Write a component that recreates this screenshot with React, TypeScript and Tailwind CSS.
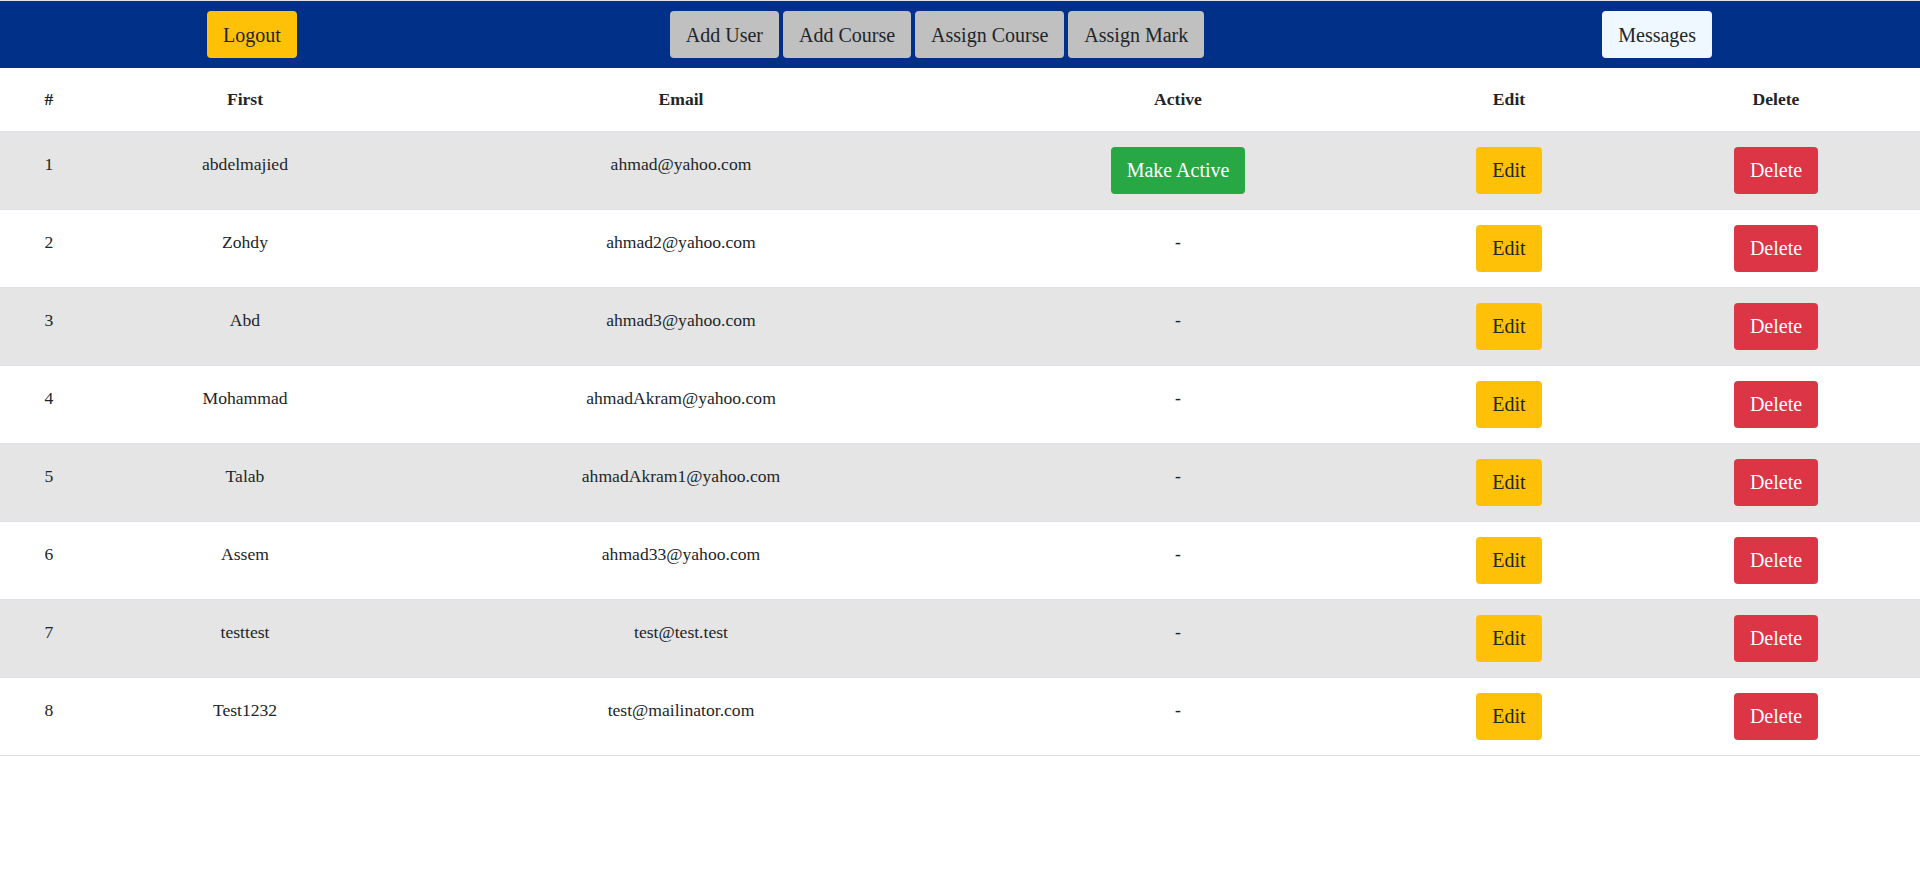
const users = [
  { id: 1, first: 'abdelmajied', email: 'ahmad@yahoo.com', active: false },
  { id: 2, first: 'Zohdy', email: 'ahmad2@yahoo.com', active: true },
  { id: 3, first: 'Abd', email: 'ahmad3@yahoo.com', active: true },
  { id: 4, first: 'Mohammad', email: 'ahmadAkram@yahoo.com', active: true },
  { id: 5, first: 'Talab', email: 'ahmadAkram1@yahoo.com', active: true },
  { id: 6, first: 'Assem', email: 'ahmad33@yahoo.com', active: true },
  { id: 7, first: 'testtest', email: 'test@test.test', active: true },
  { id: 8, first: 'Test1232', email: 'test@mailinator.com', active: true },
];

const btn = 'inline-flex items-center justify-center h-[47px] px-4 rounded text-[20px] leading-none';

export default function App() {
  return (
    <div className="min-h-screen bg-white text-[#212529] font-['Liberation_Serif',serif]">
      {/* Top bar */}
      <header className="flex items-center h-[68px] bg-[#003087] border-t border-[#e3e3e3]">
        <button className={`${btn} ml-[207px] bg-[#ffc107] text-[#212529]`}>Logout</button>

        <nav className="flex items-center gap-1 ml-[373px]">
          <button className={`${btn} bg-[#c0c0c0] text-[#212529]`}>Add User</button>
          <button className={`${btn} bg-[#c0c0c0] text-[#212529]`}>Add Course</button>
          <button className={`${btn} bg-[#c0c0c0] text-[#212529]`}>Assign Course</button>
          <button className={`${btn} bg-[#c0c0c0] text-[#212529]`}>Assign Mark</button>
        </nav>

        <button className={`${btn} ml-[398px] bg-[#f0f8ff] text-[#212529]`}>Messages</button>
      </header>

      {/* Users table */}
      <table className="w-full table-fixed border-collapse text-[17.6px] text-center">
        <colgroup>
          <col className="w-[98px]" />
          <col className="w-[294px]" />
          <col className="w-[578px]" />
          <col className="w-[416px]" />
          <col className="w-[246px]" />
          <col />
        </colgroup>
        <thead>
          <tr className="h-[63px] border-b border-[#dee2e6]">
            <th className="font-bold align-middle">#</th>
            <th className="font-bold align-middle">First</th>
            <th className="font-bold align-middle">Email</th>
            <th className="font-bold align-middle">Active</th>
            <th className="font-bold align-middle">Edit</th>
            <th className="font-bold align-middle">Delete</th>
          </tr>
        </thead>
        <tbody>
          {users.map((u, i) => (
            <tr
              key={u.id}
              className={`h-[78px] border-b border-[#dee2e6] ${i % 2 === 0 ? 'bg-[#e5e5e5]' : 'bg-white'}`}
            >
              <td className="align-top pt-5 leading-6">{u.id}</td>
              <td className="align-top pt-5 leading-6">{u.first}</td>
              <td className="align-top pt-5 leading-6">{u.email}</td>
              {u.active ? (
                <td className="align-top pt-5 leading-6 font-bold">-</td>
              ) : (
                <td className="align-middle">
                  <button className={`${btn} bg-[#28a745] text-white`}>Make Active</button>
                </td>
              )}
              <td className="align-middle">
                <button className={`${btn} bg-[#ffc107] text-[#212529]`}>Edit</button>
              </td>
              <td className="align-middle">
                <button className={`${btn} bg-[#dc3545] text-white`}>Delete</button>
              </td>
            </tr>
          ))}
        </tbody>
      </table>
    </div>
  );
}
